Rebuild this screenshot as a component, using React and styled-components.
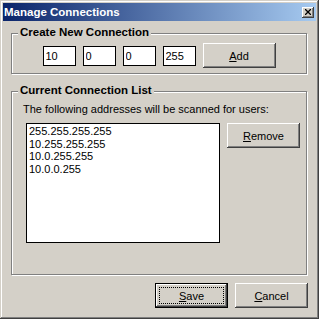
import React from 'react';
import styled, { createGlobalStyle } from 'styled-components';

const addresses = ['255.255.255.255', '10.255.255.255', '10.0.255.255', '10.0.0.255'];
const octets = ['10', '0', '0', '255'];

const App = () => {
  return (
    <>
      <GlobalStyle />
      <Window>
        <TitleBar>
          <Title>Manage Connections</Title>
          <CloseButton aria-label="Close">
            <svg width="6" height="6" viewBox="0 0 6 6">
              <path d="M0 0L6 6M6 0L0 6" stroke="#000" strokeWidth="1.3" />
            </svg>
          </CloseButton>
        </TitleBar>
        <Body>
          <GroupBox $top={12} $height={41}>
            <Legend>Create New Connection</Legend>
            <InputRow>
              {octets.map((value, i) => (
                <OctetInput key={i} defaultValue={value} />
              ))}
              <ClassicButton>
                <u>A</u>dd
              </ClassicButton>
            </InputRow>
          </GroupBox>
          <GroupBox $top={17} $height={184}>
            <Legend>Current Connection List</Legend>
            <ListSection>
              <Caption>The following addresses will be scanned for users:</Caption>
              <ListRow>
                <ListBox>
                  {addresses.map((addr) => (
                    <ListItem key={addr}>{addr}</ListItem>
                  ))}
                </ListBox>
                <ClassicButton>
                  <u>R</u>emove
                </ClassicButton>
              </ListRow>
            </ListSection>
          </GroupBox>
          <Footer>
            <ClassicButton $default>
              <FocusRing>
                <u>S</u>ave
              </FocusRing>
            </ClassicButton>
            <ClassicButton>
              <u>C</u>ancel
            </ClassicButton>
          </Footer>
        </Body>
      </Window>
    </>
  );
};

export default App;

const GlobalStyle = createGlobalStyle`
  body {
    margin: 0;
    background: #ffffff;
    font-family: "Liberation Sans", Arial, sans-serif;
    font-size: 11px;
    color: #000;
  }
`;

const bevel = `
  box-shadow: inset -1px -1px #404040, inset 1px 1px #ffffff,
    inset -2px -2px #808080, inset 2px 2px #d4d0c8;
`;

const Window = styled.div`
  width: 319px;
  height: 319px;
  box-sizing: border-box;
  padding: 3px;
  background: #d4d0c8;
  box-shadow: inset -1px -1px #404040, inset 1px 1px #d4d0c8,
    inset -2px -2px #808080, inset 2px 2px #ffffff;
  display: flex;
  flex-direction: column;
`;

const TitleBar = styled.div`
  height: 18px;
  flex-shrink: 0;
  display: flex;
  align-items: center;
  justify-content: space-between;
  padding: 0 2px 0 1px;
  background: linear-gradient(90deg, #0a246a, #a6caf0);
`;

const Title = styled.span`
  color: #ffffff;
  font-weight: bold;
  font-size: 11.5px;
  line-height: 18px;
`;

const CloseButton = styled.button`
  width: 12px;
  height: 11px;
  padding: 0;
  border: none;
  background: #d4d0c8;
  ${bevel}
  display: flex;
  align-items: center;
  justify-content: center;
`;

const Body = styled.div`
  flex: 1;
  display: flex;
  flex-direction: column;
  padding: 0 9px 0 8px;
`;

const GroupBox = styled.div`
  position: relative;
  box-sizing: border-box;
  margin-top: ${(p) => p.$top}px;
  height: ${(p) => p.$height}px;
  border: 1px solid #808080;
  box-shadow: inset 1px 1px #ffffff, 1px 1px #ffffff;
`;

const Legend = styled.span`
  position: absolute;
  top: -8px;
  left: 6px;
  padding: 0 2px;
  background: #d4d0c8;
  font-weight: bold;
  font-size: 11.5px;
  line-height: 13px;
`;

const InputRow = styled.div`
  display: flex;
  align-items: center;
  justify-content: center;
  gap: 7px;
  padding-top: 9px;
`;

const OctetInput = styled.input`
  width: 33px;
  height: 20px;
  box-sizing: border-box;
  border: 1px solid #000;
  padding: 0 2px;
  font: inherit;
  background: #fff;
  outline: none;
`;

const ClassicButton = styled.button`
  width: 73px;
  height: 25px;
  box-sizing: border-box;
  padding: ${(p) => (p.$default ? '3px' : '0')};
  border: ${(p) => (p.$default ? '1px solid #000' : 'none')};
  background: #d4d0c8;
  ${bevel}
  font: inherit;
  color: #000;
  display: flex;
  align-items: center;
  justify-content: center;
`;

const FocusRing = styled.span`
  flex: 1;
  align-self: stretch;
  display: flex;
  align-items: center;
  justify-content: center;
  border: 1px dotted #000;
`;

const ListSection = styled.div`
  display: flex;
  flex-direction: column;
  padding: 11px 0 0 11px;
`;

const Caption = styled.div`
  line-height: 13px;
`;

const ListRow = styled.div`
  display: flex;
  align-items: flex-start;
  gap: 7px;
  margin: 7px 0 0 3px;
`;

const ListBox = styled.div`
  width: 194px;
  height: 120px;
  box-sizing: border-box;
  border: 1px solid #000;
  background: #ffffff;
  padding: 1px 2px;
`;

const ListItem = styled.div`
  line-height: 12.5px;
  white-space: nowrap;
`;

const Footer = styled.div`
  display: flex;
  justify-content: flex-end;
  gap: 7px;
  margin-top: 8px;
  margin-right: -1px;
`;
